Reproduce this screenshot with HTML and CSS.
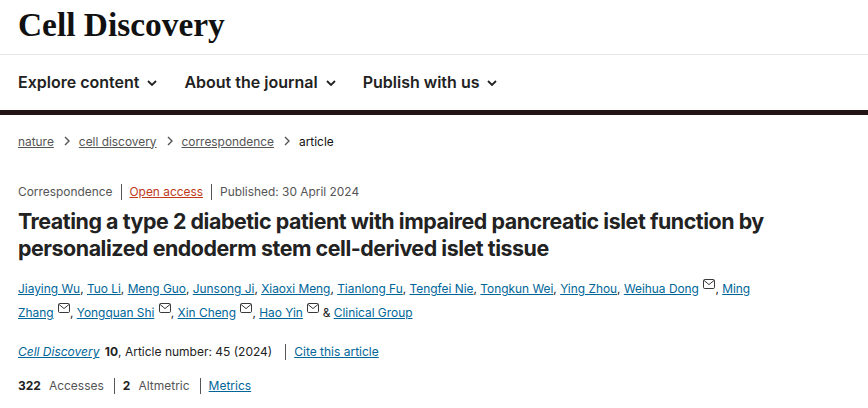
FILE: index.html
```html
<!DOCTYPE html>
<html lang="en">
<head>
<meta charset="utf-8">
<title>Cell Discovery</title>
<link rel="stylesheet" href="styles.css">
</head>
<body>
<svg class="defs" width="0" height="0" aria-hidden="true">
  <symbol id="mail" viewBox="0 0 12 10"><rect x="0.5" y="0.5" width="11" height="9" rx="1.2" fill="none" stroke="#222" stroke-width="0.9"/><path d="M1 1.4 6 5.6l5-4.2" fill="none" stroke="#222" stroke-width="0.9"/></symbol>
  <symbol id="down" viewBox="0 0 10 6"><path d="M1 1l4 4 4-4" fill="none" stroke="#222" stroke-width="1.8"/></symbol>
  <symbol id="right" viewBox="0 0 6 10"><path d="M1 1l4 4-4 4" fill="none" stroke="#555" stroke-width="1.4"/></symbol>
</svg>
<header class="brand"><span class="logo">Cell Discovery</span></header>
<nav class="nav">
  <span class="nav-item">Explore content<svg class="down"><use href="#down"/></svg></span>
  <span class="nav-item">About the journal<svg class="down"><use href="#down"/></svg></span>
  <span class="nav-item">Publish with us<svg class="down"><use href="#down"/></svg></span>
</nav>
<div class="crumbs">
  <a href="#">nature</a><svg class="right"><use href="#right"/></svg>
  <a href="#">cell discovery</a><svg class="right"><use href="#right"/></svg>
  <a href="#">correspondence</a><svg class="right"><use href="#right"/></svg>
  <span class="current">article</span>
</div>
<main class="article">
  <ul class="meta">
    <li>Correspondence</li>
    <li><a class="oa" href="#">Open access</a></li>
    <li>Published: 30 April 2024</li>
  </ul>
  <h1 class="title">Treating a type 2 diabetic patient with impaired pancreatic islet function by personalized endoderm stem cell-derived islet tissue</h1>
  <ul class="authors">
    <li><a href="#">Jiaying Wu</a>, </li>
    <li><a href="#">Tuo Li</a>, </li>
    <li><a href="#">Meng Guo</a>, </li>
    <li><a href="#">Junsong Ji</a>, </li>
    <li><a href="#">Xiaoxi Meng</a>, </li>
    <li><a href="#">Tianlong Fu</a>, </li>
    <li><a href="#">Tengfei Nie</a>, </li>
    <li><a href="#">Tongkun Wei</a>, </li>
    <li><a href="#">Ying Zhou</a>, </li>
    <li><a href="#">Weihua Dong</a><svg class="mail"><use href="#mail"/></svg>, </li>
    <li><a href="#">Ming</a> <a href="#">Zhang</a><svg class="mail"><use href="#mail"/></svg>, </li>
    <li><a href="#">Yongquan Shi</a><svg class="mail"><use href="#mail"/></svg>, </li>
    <li><a href="#">Xin Cheng</a><svg class="mail"><use href="#mail"/></svg>, </li>
    <li><a href="#">Hao Yin</a><svg class="mail"><use href="#mail"/></svg> &amp; </li>
    <li><a href="#">Clinical Group</a></li>
  </ul>
  <ul class="cite">
    <li><a class="journal" href="#">Cell Discovery</a> <b class="vol">10</b>, Article number: 45 (2024)</li>
    <li><a href="#">Cite this article</a></li>
  </ul>
  <ul class="metrics">
    <li><b>322</b><span>Accesses</span></li>
    <li><b>2</b><span>Altmetric</span></li>
    <li><a href="#">Metrics</a></li>
  </ul>
</main>
</body>
</html>
```

FILE: styles.css
```css
* { box-sizing: border-box; }
html, body { margin: 0; padding: 0; }
body { background: #fff; color: #222; font-family: Inter, "Liberation Sans", sans-serif; overflow: hidden; }
.defs { position: absolute; }
.brand { height: 55px; padding: 6px 18px 0; border-bottom: 1px solid #e8e8e8; }
.logo { font-family: "Liberation Serif", serif; font-weight: 700; font-size: 33.4px; line-height: 38px; color: #111; display: block; }
.nav { height: 60px; padding: 0 18px 1px; display: flex; align-items: center; gap: 27px; border-bottom: 5px solid #231415; }
.nav-item { font-size: 16px; font-weight: 600; color: #222; display: flex; align-items: center; white-space: nowrap; }
.down { width: 10px; height: 6px; margin-left: 8px; margin-top: 1px; }
.crumbs { height: 52px; padding: 0 18px; display: flex; align-items: center; font-size: 11.9px; }
.crumbs a { color: #555; }
.current { color: #111; }
.right { width: 6px; height: 10px; margin: 0 9px 0 10px; }
.article { padding: 0 18px; }
.meta, .cite, .metrics { list-style: none; margin: 0; padding: 0; display: flex; font-size: 12px; line-height: 16px; }
.meta { margin-top: 17px; color: #555; font-size: 11.92px; }
.meta li + li { margin-left: 8px; padding-left: 8px; border-left: 1px solid #555; }
.oa { color: #c0391b; }
.title { margin: 8px 0 0; font-size: 21.4px; line-height: 27px; font-weight: 700; letter-spacing: -0.45px; color: #222; width: 780px; }
.authors { list-style: none; margin: 15px 0 0; padding: 0; font-size: 11.9px; line-height: 24px; color: #222; width: 760px; }
.authors li { display: inline; }
a { color: #069; }
.mail { width: 12px; height: 10px; margin-left: 4.5px; vertical-align: 4px; }
.cite { margin-top: 19px; color: #222; }
.journal { font-style: italic; }
.vol { font-weight: 700; margin-left: 2px; }
.cite li + li { margin-left: 13px; padding-left: 8px; border-left: 1px solid #555; }
.metrics { margin-top: 18px; color: #555; }
.metrics b { color: #222; font-weight: 700; margin-right: 8px; }
.metrics li + li { margin-left: 10px; padding-left: 8px; border-left: 1px solid #555; }
```
